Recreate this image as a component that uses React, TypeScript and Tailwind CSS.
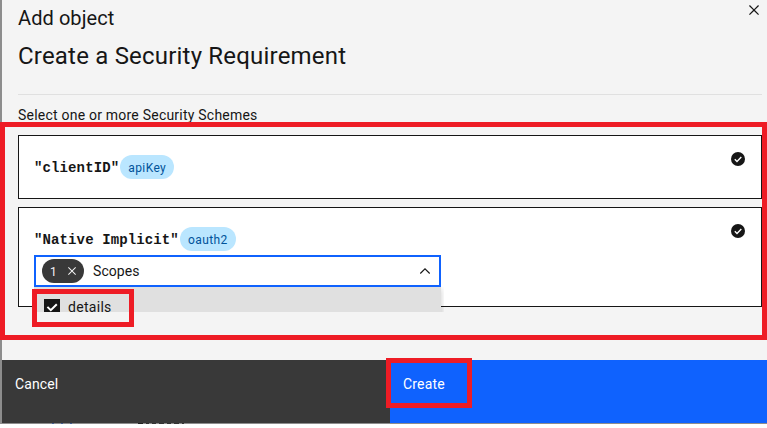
import React from 'react';

function CloseIcon({ className }: { className: string }) {
  return (
    <svg viewBox="0 0 32 32" fill="currentColor" className={className}>
      <path d="M24 9.4 22.6 8 16 14.6 9.4 8 8 9.4 14.6 16 8 22.6 9.4 24 16 17.4 22.6 24 24 22.6 17.4 16Z" />
    </svg>
  );
}

function CheckBadge() {
  return (
    <svg viewBox="0 0 16 16" className="mt-[15px] h-4 w-4 shrink-0">
      <circle cx="8" cy="8" r="7" fill="#161616" />
      <path d="M4.8 8.2 7 10.4 11.3 6.1" fill="none" stroke="#fff" strokeWidth="1.4" />
    </svg>
  );
}

function Tag({ children, className }: { children: string; className: string }) {
  return (
    <span
      className={`flex h-6 items-center justify-center whitespace-nowrap rounded-full bg-[#bae6ff] pt-[2px] text-[12px] leading-4 tracking-[0.4px] text-[#00539a] ${className}`}
    >
      {children}
    </span>
  );
}

function Scheme({ name, tag, tagClass }: { name: string; tag: string; tagClass: string }) {
  return (
    <div className="flex h-6 items-center">
      <span className="whitespace-pre pt-px font-['Liberation_Mono',monospace] text-[14px] font-bold leading-5 tracking-[0.12px]">
        {name}
      </span>
      <Tag className={tagClass}>{tag}</Tag>
    </div>
  );
}

function ScopeSelect() {
  return (
    <div className="relative w-[407px]">
      <div className="flex h-8 items-center border-2 border-[#0f62fe] bg-white pl-[6px] pr-2">
        <span className="flex h-6 w-[42px] items-center rounded-full bg-[#393939] pl-2 pt-px text-[12px] text-[#f4f4f4]">
          1
          <CloseIcon className="-mt-px ml-[7px] h-4 w-4" />
        </span>
        <span className="ml-[9px] text-[14px] leading-5 tracking-[0.08px]">Scopes</span>
        <svg viewBox="0 0 16 16" className="ml-auto -mr-[2px] h-4 w-4">
          <path d="m3.3 10.5 4.7-4.7 4.7 4.7" fill="none" stroke="#161616" strokeWidth="1.1" />
        </svg>
      </div>
      <div className="absolute left-0 top-8 h-[25px] w-[410px] overflow-hidden">
        <div className="flex h-10 w-[407px] items-start bg-[#e0e0e0] pl-[10px] pt-3 shadow-[0_2px_6px_rgba(0,0,0,0.2)]">
          <svg viewBox="0 0 16 16" className="h-4 w-4">
            <rect width="16" height="16" fill="#161616" />
            <path d="m3.4 7.9 3.4 3.3 6-6" fill="none" stroke="#fff" strokeWidth="2" />
          </svg>
          <span className="ml-2 mt-[3px] text-[14px] leading-[10px] tracking-[0.3px]">details</span>
        </div>
      </div>
      <div className="absolute -left-[2px] top-[34px] h-[38px] w-[102px] border-[5px] border-[#ee1c25]" />
    </div>
  );
}

export default function App() {
  return (
    <div className="relative h-[428px] w-[767px] overflow-hidden bg-white font-['Roboto',sans-serif] text-[#161616]">
      <div className="flex h-[424px] flex-col bg-[#8d8d8d] pl-[2px]">
        <div className="flex h-[360px] flex-col bg-[#f4f4f4] pl-4 pr-[5px]">
          <header className="box-content flex h-[94px] justify-between border-b border-[#e0e0e0]">
            <div className="pt-[5px]">
              <p className="text-[20px] leading-[26px] tracking-[0.08px]">Add object</p>
              <h1 className="mt-[9px] text-[24px] leading-8 tracking-[0.2px]">Create a Security Requirement</h1>
            </div>
            <CloseIcon className="-mr-[2px] h-5 w-5" />
          </header>
          <p className="mt-[10px] text-[14px] leading-5 tracking-[0.22px]">Select one or more Security Schemes</p>
          <section className="mt-[10px] flex flex-col gap-2">
            <div className="flex h-16 justify-between border border-[#161616] bg-white pl-[15px] pr-[15px]">
              <div className="pt-[19px]">
                <Scheme name={'"clientID"'} tag="apiKey" tagClass="ml-[1px] w-[54px]" />
              </div>
              <CheckBadge />
            </div>
            <div className="flex h-[100px] justify-between border border-[#161616] bg-white pl-[15px] pr-[15px]">
              <div className="pt-[19px]">
                <Scheme name={'"Native Implicit"'} tag="oauth2" tagClass="ml-[1px] w-14" />
                <div className="mt-1">
                  <ScopeSelect />
                </div>
              </div>
              <CheckBadge />
            </div>
          </section>
        </div>
        <footer className="flex h-[63px] text-[14px] leading-5 text-white">
          <div className="w-[388px] bg-[#393939] pl-[13px] pt-[14px] tracking-[0.1px]">Cancel</div>
          <div className="flex-1 bg-[#0f62fe] pl-[13px] pt-[14px] tracking-[0.16px]">Create</div>
        </footer>
        <div className="flex h-px items-start">
          <div className="ml-[50px] flex gap-[7px]">
            <i className="h-px w-[2px] bg-[#425d91]" />
            <i className="h-px w-[2px] bg-[#425d91]" />
            <i className="h-px w-[2px] bg-[#425d91]" />
          </div>
          <div className="ml-[66px] flex gap-[3px]">
            <i className="h-px w-[5px] bg-[#222]" />
            <i className="h-px w-[3px] bg-[#333]" />
            <i className="h-px w-[4px] bg-[#333]" />
            <i className="h-px w-[5px] bg-[#333]" />
            <i className="h-px w-[4px] bg-[#333]" />
            <i className="h-px w-[5px] bg-[#333]" />
            <i className="h-px w-[2px] bg-[#333]" />
          </div>
        </div>
      </div>
      <div className="absolute left-0 top-[122px] h-[218px] w-[767px] border-[5px] border-[#ee1c25]" />
      <div className="absolute left-[386px] top-[358px] h-[50px] w-[86px] border-[5px] border-[#ee1c25]" />
    </div>
  );
}
